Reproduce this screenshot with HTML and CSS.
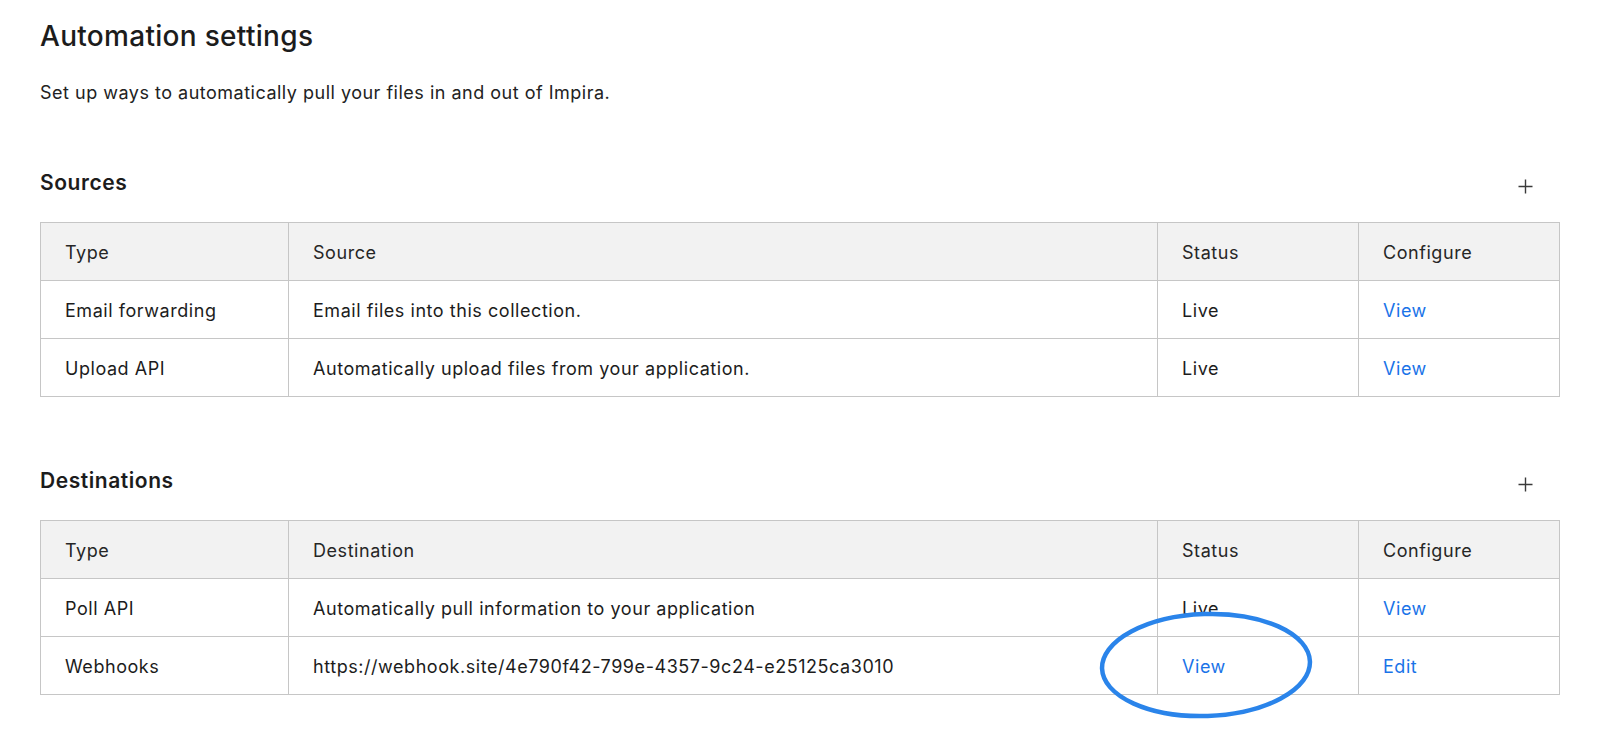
FILE: index.html
```html
<!DOCTYPE html>
<html lang="en">
<head>
    <meta charset="UTF-8">
    <meta name="viewport" content="width=device-width, initial-scale=1.0">
    <title>Automation settings</title>
    <link rel="stylesheet" href="styles.css">
</head>
<body>
    <div class="page">
        <h1 class="title">Automation settings</h1>
        <p class="subtitle">Set up ways to automatically pull your files in and out of Impira.</p>

        <div class="section">
            <div class="section-head">
                <h2>Sources</h2>
                <button class="add-btn" title="Add source">
                    <svg width="15" height="15" viewBox="0 0 15 15"><path d="M7.5 0.5v14M0.5 7.5h14" stroke="#3a3a3a" stroke-width="1.4" fill="none"/></svg>
                </button>
            </div>
            <table class="auto-table">
                <thead>
                    <tr>
                        <th class="col-type">Type</th>
                        <th class="col-main">Source</th>
                        <th class="col-status">Status</th>
                        <th class="col-config">Configure</th>
                    </tr>
                </thead>
                <tbody>
                    <tr>
                        <td>Email forwarding</td>
                        <td>Email files into this collection.</td>
                        <td>Live</td>
                        <td><a href="#">View</a></td>
                    </tr>
                    <tr>
                        <td>Upload API</td>
                        <td>Automatically upload files from your application.</td>
                        <td>Live</td>
                        <td><a href="#">View</a></td>
                    </tr>
                </tbody>
            </table>
        </div>

        <div class="section section-second">
            <div class="section-head">
                <h2>Destinations</h2>
                <button class="add-btn" title="Add destination">
                    <svg width="15" height="15" viewBox="0 0 15 15"><path d="M7.5 0.5v14M0.5 7.5h14" stroke="#3a3a3a" stroke-width="1.4" fill="none"/></svg>
                </button>
            </div>
            <table class="auto-table">
                <thead>
                    <tr>
                        <th class="col-type">Type</th>
                        <th class="col-main">Destination</th>
                        <th class="col-status">Status</th>
                        <th class="col-config">Configure</th>
                    </tr>
                </thead>
                <tbody>
                    <tr>
                        <td>Poll API</td>
                        <td>Automatically pull information to your application</td>
                        <td>Live</td>
                        <td><a href="#">View</a></td>
                    </tr>
                    <tr>
                        <td>Webhooks</td>
                        <td>https://webhook.site/4e790f42-799e-4357-9c24-e25125ca3010</td>
                        <td><a href="#">View</a></td>
                        <td><a href="#">Edit</a></td>
                    </tr>
                </tbody>
            </table>
        </div>

        <!-- hand-drawn highlight round the webhook View link -->
        <svg class="circle-mark" width="220" height="116" viewBox="0 0 220 116">
            <ellipse cx="108" cy="55" rx="104" ry="51" transform="rotate(-2 108 55)" fill="none" stroke="#2a84ea" stroke-width="4.5"/>
        </svg>
    </div>
</body>
</html>
```

FILE: styles.css
```css
body {
    margin: 0;
    background-color: #ffffff;
    font-family: Inter, "Noto Sans", sans-serif;
    color: #1c1c1c;
}
.page {
    position: relative;
    padding: 19px 40px 60px 40px;
}
.title {
    margin: 0;
    font-size: 28px;
    line-height: 34px;
    font-weight: 500;
    letter-spacing: 0.3px;
}
.subtitle {
    margin: 28px 0 0 0;
    font-size: 18px;
    line-height: 24px;
    letter-spacing: 0.5px;
    color: #222;
}
.section {
    margin-top: 64px;
}
.section-second {
    margin-top: 70px;
}
.section-head {
    display: flex;
    justify-content: space-between;
    align-items: center;
    height: 28px;
}
.section-head h2 {
    margin: 0;
    font-size: 21px;
    line-height: 28px;
    font-weight: 600;
    letter-spacing: 0.55px;
}
.add-btn {
    background: none;
    border: none;
    padding: 0;
    margin: 7px 27px 0 0;
    width: 15px;
    height: 15px;
    cursor: pointer;
    display: flex;
}
.auto-table {
    margin-top: 25px;
    width: 100%;
    border-collapse: collapse;
    font-size: 18px;
    line-height: 24px;
    letter-spacing: 0.55px;
}
.auto-table th,
.auto-table td {
    border: 1px solid #c6c6c6;
    padding: 3px 24px 0 24px;
    height: 54px;
    text-align: left;
    vertical-align: middle;
}
.auto-table th {
    background-color: #f2f2f2;
    font-weight: 400;
    color: #262626;
}
.col-type {
    width: 199px;
}
.col-status,
.col-config {
    width: 152px;
}
.auto-table a {
    color: #1a73e8;
    text-decoration: none;
}
.circle-mark {
    position: absolute;
    left: 1098px;
    top: 610px;
    pointer-events: none;
}
```
